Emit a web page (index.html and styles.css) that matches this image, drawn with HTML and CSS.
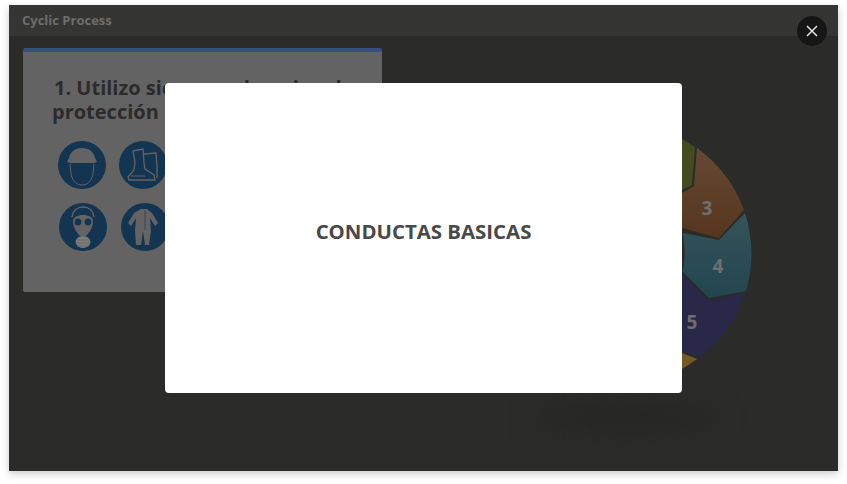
FILE: index.html
```html
<!DOCTYPE html>
<html lang="es">
<head>
    <meta charset="UTF-8">
    <meta name="viewport" content="width=device-width, initial-scale=1.0">
    <title>Cyclic Process</title>
    <link rel="stylesheet" href="styles.css">
</head>
<body>
    <div class="frame">
        <div class="topbar">Cyclic Process</div>
        <div class="content">
            <div class="card">
                <h2>1. Utilizo siempre el equipo de<br>protección personal adecuado</h2>
                <div class="icon-row">
                    <!-- helmet -->
                    <svg class="icon" viewBox="0 0 48 48"><circle cx="24" cy="24" r="24" fill="#143552"/><path d="M11 17c1-6 6-10 13-10s12 4 13 10l2 4-3 1H12l-3-1z" fill="#636363"/><path d="M12 23l1 10c1 5 4 11 11 11s10-6 11-11l1-10" fill="none" stroke="#636363" stroke-width="1"/></svg>
                    <!-- boots -->
                    <svg class="icon" viewBox="0 0 48 48"><circle cx="24" cy="24" r="24" fill="#143552"/><path d="M14 10l10-2 1 14 1 6 9 6 1 5H10l-1-3 6-7 1-8z" fill="none" stroke="#636363" stroke-width="1.3"/><path d="M25 13l12-1 1 14v11" fill="none" stroke="#636363" stroke-width="1.3"/><path d="M12 35l14 0" stroke="#636363" stroke-width="1"/></svg>
                </div>
                <div class="icon-row icon-row-b">
                    <!-- gas mask -->
                    <svg class="icon" viewBox="0 0 48 48"><circle cx="24" cy="24" r="24" fill="#143552"/><path d="M13 14c1-7 6-10 11-10s10 3 11 10" fill="none" stroke="#636363" stroke-width="1.4"/><path d="M14 18c0-4 5-6 10-6s10 2 10 6c0 6-3 11-7 15h-6c-4-4-7-9-7-15z" fill="#636363"/><circle cx="19" cy="19" r="3.4" fill="#143552"/><circle cx="29" cy="19" r="3.4" fill="#143552"/><ellipse cx="24" cy="39" rx="7.5" ry="6" fill="#7d7d7d"/><path d="M18 37h12M17 40h14M18 43h12" stroke="#636363" stroke-width=".8"/></svg>
                    <!-- coverall -->
                    <svg class="icon" viewBox="0 0 48 48"><circle cx="24" cy="24" r="24" fill="#143552"/><path d="M20 6h6l5 4 6 10-3 3-5-8 1 13-2 14h-4l-2-14-2 14h-5l-1-14 1-13-5 8-3-3 6-10z" fill="#636363"/><path d="M24 7v20" stroke="#143552" stroke-width=".6"/></svg>
                </div>
            </div>
            <svg class="pie" viewBox="0 0 70 240">
                <defs>
                    <linearGradient id="seg3" x1="0" y1="0" x2="0" y2="1"><stop offset="0" stop-color="#654835"/><stop offset="1" stop-color="#56361d"/></linearGradient>
                    <linearGradient id="seg4" x1="0" y1="0" x2="0" y2="1"><stop offset="0" stop-color="#35535a"/><stop offset="1" stop-color="#22464f"/></linearGradient>
                </defs>
                <path d="M0 9 13 17 10 55 0 60z" fill="#454b20"/>
                <path d="M15 18A134 134 0 0 1 62 80L37 108 0 98V63L12 56z" fill="url(#seg3)"/>
                <path d="M63 83A134 134 0 0 1 64 161L27 168 1 142 3 123 1 103 37 110z" fill="url(#seg4)"/>
                <path d="M63 163A134 134 0 0 1 17 228L0 220V144L27 171z" fill="#292849"/>
                <path d="M0 223 15 229A134 134 0 0 1 0 239z" fill="#735a24"/>
                <text x="25" y="85" class="pie-num">3</text>
                <text x="36" y="143" class="pie-num">4</text>
                <text x="10" y="199" class="pie-num">5</text>
            </svg>
            <div class="floor-shadow"></div>
        </div>
        <div class="modal">
            <h1>CONDUCTAS BASICAS</h1>
        </div>
        <button class="close" aria-label="Cerrar">
            <svg viewBox="0 0 12 12"><path d="M1 1l10 10M11 1L1 11" stroke="#e4e4e4" stroke-width="1.5" fill="none"/></svg>
        </button>
    </div>
</body>
</html>
```

FILE: styles.css
```css
html, body {
    height: 100%;
}
body {
    font-family: "Open Sans", sans-serif;
    background-color: #fff;
    margin: 0;
    padding: 5px 9px 13px;
    box-sizing: border-box;
    overflow: hidden;
}
.frame {
    position: relative;
    height: 466px;
    background-color: #2b2b2a;
    box-shadow: 0 3px 8px rgba(0, 0, 0, 0.2);
    display: flex;
    flex-direction: column;
}
.topbar {
    height: 31px;
    flex: none;
    padding-left: 13px;
    background-color: #353534;
    color: #6d6d6d;
    font-size: 13px;
    font-weight: 700;
    line-height: 31px;
}
.content {
    position: relative;
    flex: 1;
    padding: 12px 14px;
}
.card {
    width: 359px;
    height: 244px;
    box-sizing: border-box;
    background-color: #636363;
    border-top: 4px solid #33507e;
    border-radius: 2px;
    padding: 24px 0 0 29px;
}
.card h2 {
    margin: 0 0 17px;
    color: #2b2b2b;
    font-size: 20px;
    font-weight: 700;
    line-height: 24px;
    text-indent: 2px;
    white-space: nowrap;
}
.icon-row {
    display: flex;
    gap: 13px;
    margin-left: 6px;
}
.icon-row-b {
    gap: 14px;
    margin-top: 14px;
    margin-left: 7px;
}
.icon {
    width: 48px;
    height: 48px;
    display: block;
}
.pie {
    position: absolute;
    left: 673px;
    top: 94px;
    width: 70px;
    height: 240px;
}
.pie-num {
    font-family: "Open Sans", sans-serif;
    font-size: 19px;
    font-weight: 700;
    text-anchor: middle;
    fill: #6f6f6f;
}
.floor-shadow {
    position: absolute;
    left: 522px;
    top: 367px;
    width: 190px;
    height: 30px;
    border-radius: 50%;
    background-color: #262625;
    filter: blur(12px);
}
.modal {
    position: absolute;
    left: 156px;
    top: 78px;
    width: 517px;
    height: 310px;
    background-color: #fff;
    border-radius: 4px;
    display: flex;
    justify-content: center;
    padding-top: 133px;
    box-sizing: border-box;
}
.modal h1 {
    margin: 0;
    color: #484848;
    font-size: 20.4px;
    font-weight: 700;
    line-height: 30px;
}
.close {
    position: absolute;
    left: 788px;
    top: 11px;
    width: 30px;
    height: 30px;
    padding: 9px;
    border: none;
    border-radius: 50%;
    background-color: #161616;
}
.close svg {
    display: block;
    width: 12px;
    height: 12px;
}
```
